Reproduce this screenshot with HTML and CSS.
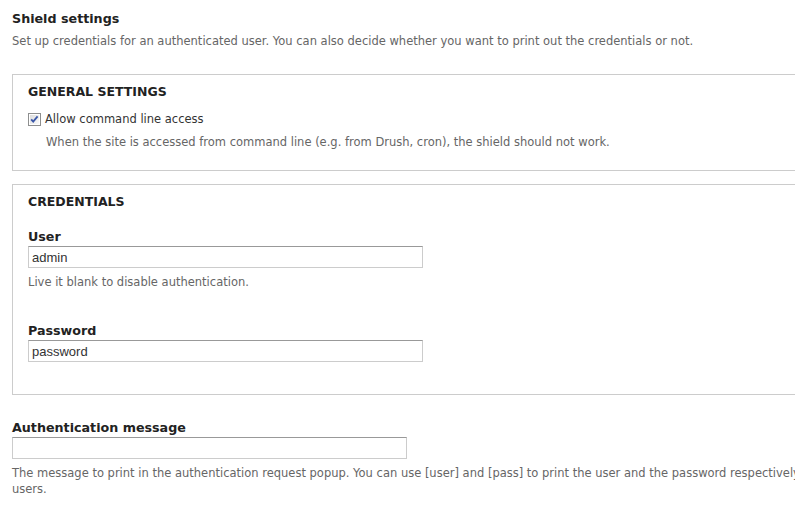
FILE: index.html
```html
<!DOCTYPE html>
<html lang="en">
<head>
    <meta charset="UTF-8">
    <title>Shield settings</title>
    <link rel="stylesheet" href="styles.css">
</head>
<body>

    <h2 class="page-title">Shield settings</h2>
    <p class="intro">Set up credentials for an authenticated user. You can also decide whether you want to print out the credentials or not.</p>

    <fieldset class="group">
        <legend class="group-title">General settings</legend>
        <label class="check-item" for="allow_cli">
            <input type="checkbox" id="allow_cli" checked>
            <svg class="check-box" width="13" height="13" viewBox="0 0 13 13">
                <defs>
                    <linearGradient id="boxfill" x1="0" y1="0" x2="1" y2="1">
                        <stop offset="0" stop-color="#dcdcdc"/>
                        <stop offset="1" stop-color="#fbfbfb"/>
                    </linearGradient>
                </defs>
                <rect x="0.5" y="0.5" width="12" height="12" fill="#fff" stroke="#8e8f8f"/>
                <rect x="2" y="2" width="9" height="9" fill="url(#boxfill)"/>
                <path d="M3.2 6.4 L5.2 8.6 L9.6 3.4" fill="none" stroke="#3a57a8" stroke-width="1.8"/>
            </svg>
            <span>Allow command line access</span>
        </label>
        <div class="description indent">When the site is accessed from command line (e.g. from Drush, cron), the shield should not work.</div>
    </fieldset>

    <fieldset class="group">
        <legend class="group-title">Credentials</legend>
        <div class="form-item">
            <label for="user" class="field-label">User</label>
            <input type="text" id="user" class="text-field" value="admin">
            <div class="description">Live it blank to disable authentication.</div>
        </div>
        <div class="form-item">
            <label for="pass" class="field-label">Password</label>
            <input type="text" id="pass" class="text-field" value="password">
        </div>
    </fieldset>

    <div class="form-item outer">
        <label for="print" class="field-label">Authentication message</label>
        <input type="text" id="print" class="text-field" value="">
        <div class="description wide">The message to print in the authentication request popup. You can use [user] and [pass] to print the user and the password respectively. Leave it blank to hide the credentials from<br>users.</div>
    </div>

</body>
</html>
```

FILE: styles.css
```css
html, body {
    overflow: hidden;
}
body {
    margin: 0;
    padding: 0 0 0 12px;
    font-family: "DejaVu Sans", Verdana, sans-serif;
    font-size: 12px;
    color: #333;
    background: #fff;
}
.page-title {
    margin: 0;
    padding-top: 10px;
    font-size: 12.7px;
    line-height: 18px;
    font-weight: bold;
    color: #222;
}
.intro {
    margin: 5px 0 0;
    font-size: 11.5px;
    line-height: 16px;
    color: #666;
    white-space: nowrap;
}
.group {
    position: relative;
    margin: 25px 0 0;
    padding: 41px 15px 20px;
    width: 800px;
    border: 1px solid #ccc;
    min-width: 0;
}
.group + .group {
    margin-top: 13px;
    padding-bottom: 32px;
}
.group-title {
    position: absolute;
    top: 9px;
    left: 15px;
    padding: 0;
    font-size: 12.5px;
    font-weight: bold;
    text-transform: uppercase;
    color: #222;
}
.check-item {
    display: flex;
    align-items: center;
    height: 18px;
    margin-top: -6px;
    font-size: 11.5px;
    color: #333;
}
.check-item input {
    display: none;
}
.check-box {
    margin-right: 4px;
    flex: none;
}
.description {
    font-size: 11.5px;
    line-height: 16px;
    color: #666;
    margin-top: 6px;
}
.indent {
    margin-left: 18px;
}
.form-item + .form-item {
    margin-top: 33px;
}
.field-label {
    display: block;
    font-size: 12.7px;
    font-weight: bold;
    color: #222;
    line-height: 16px;
    margin-top: 1px;
}
.text-field {
    display: block;
    box-sizing: border-box;
    width: 395px;
    height: 22px;
    margin: 1px 0 0;
    padding: 1px 3px;
    font-family: "Liberation Sans", Arial, sans-serif;
    font-size: 13px;
    color: #333;
    border: 1px solid #ccc;
    border-top-color: #999;
    background: #fff;
}
.group .form-item:first-of-type {
    margin-top: 3px;
}
.outer {
    margin-top: 25px;
}
.wide {
    white-space: nowrap;
}
```
